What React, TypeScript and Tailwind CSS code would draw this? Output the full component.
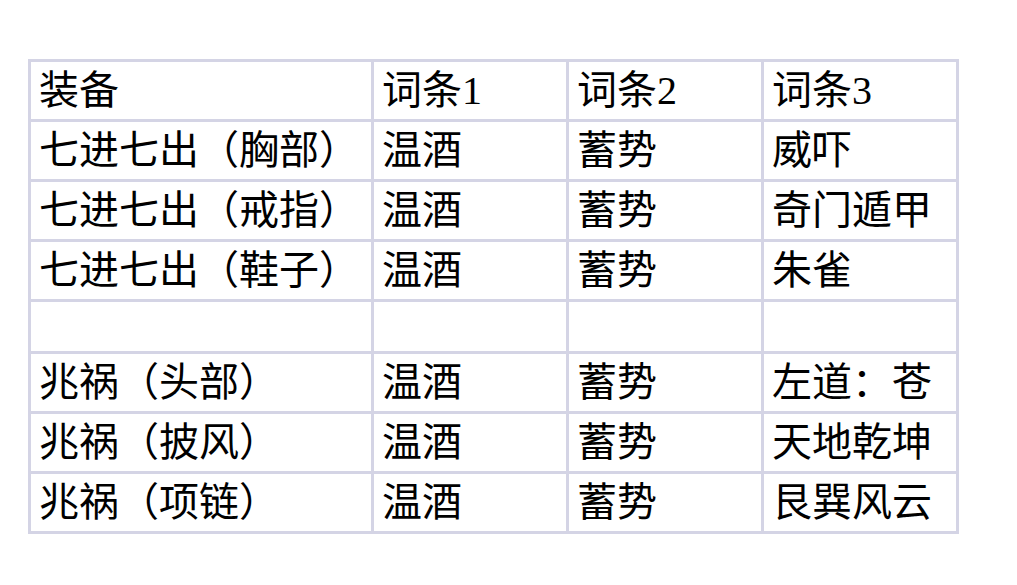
const HEAD = ["装备", "词条1", "词条2", "词条3"];

const ROWS: (string[] | null)[] = [
  ["七进七出（胸部）", "温酒", "蓄势", "威吓"],
  ["七进七出（戒指）", "温酒", "蓄势", "奇门遁甲"],
  ["七进七出（鞋子）", "温酒", "蓄势", "朱雀"],
  null,
  ["兆祸（头部）", "温酒", "蓄势", "左道：苍"],
  ["兆祸（披风）", "温酒", "蓄势", "天地乾坤"],
  ["兆祸（项链）", "温酒", "蓄势", "艮巽风云"],
];

function Cell({ text, empty }: { text?: string; empty?: boolean }) {
  return (
    <div className={`flex items-center bg-white pl-[8px] ${empty ? "h-[49px]" : "h-[57px]"}`}>
      {text}
    </div>
  );
}

export default function App() {
  return (
    <div className="h-[585px] w-[1017px] bg-white pl-[28px] pt-[59px]">
      <div
        className="grid w-[931px] grid-cols-[340px_192px_192px_192px] gap-[3px] bg-[#d4d4e5] p-[3px] text-[40px] leading-none text-black"
        style={{ fontFamily: '"Liberation Serif", "Noto Sans CJK SC", sans-serif' }}
      >
        {HEAD.map((h) => (
          <Cell key={h} text={h} />
        ))}
        {ROWS.map((row, i) =>
          row ? row.map((c, j) => <Cell key={`${i}-${j}`} text={c} />) : [0, 1, 2, 3].map((j) => <Cell key={`${i}-${j}`} empty />)
        )}
      </div>
    </div>
  );
}
